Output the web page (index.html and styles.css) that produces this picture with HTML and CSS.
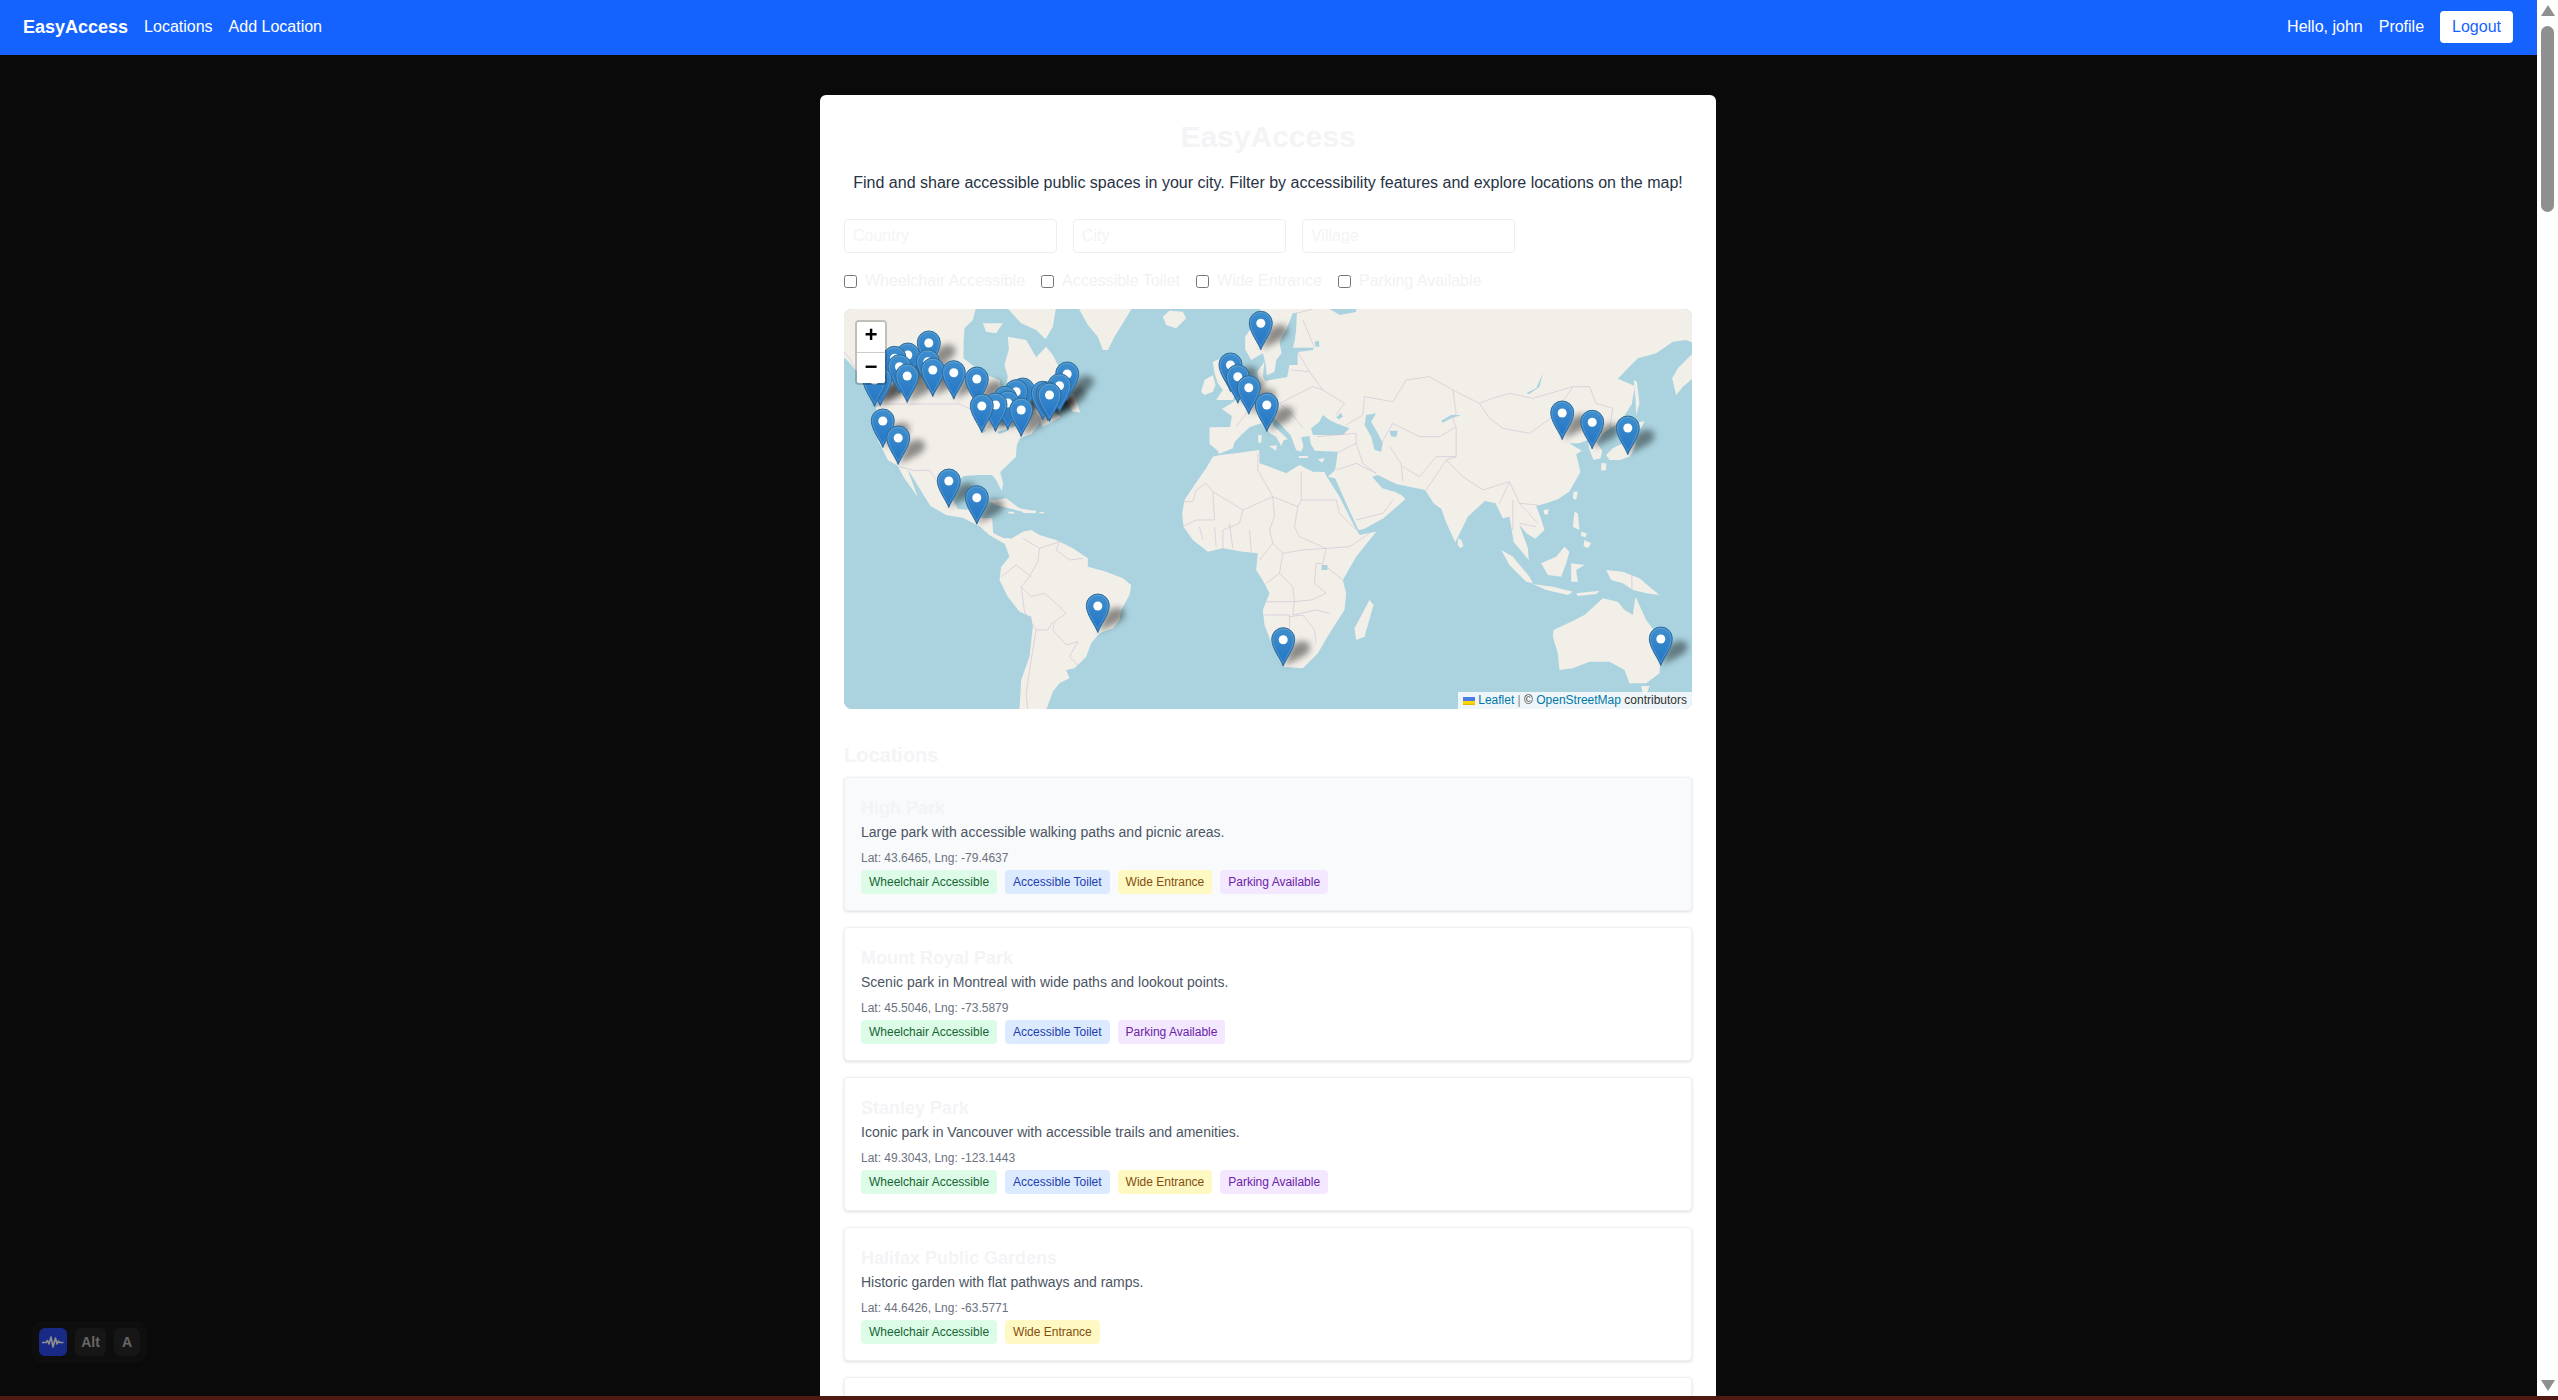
FILE: index.html
```html
<!DOCTYPE html>
<html lang="en">
<head>
  <meta charset="UTF-8" />
  <meta name="viewport" content="width=device-width, initial-scale=1.0"/>
  <title>EasyAccess</title>
  <link rel="stylesheet" href="styles.css">
</head>
<body>

  <div class="page">
    <nav class="navbar">
      <div class="nav-group">
        <a class="brand">EasyAccess</a>
        <a>Locations</a>
        <a>Add Location</a>
      </div>
      <div class="nav-group">
        <span>Hello, john</span>
        <a>Profile</a>
        <button class="logout">Logout</button>
      </div>
    </nav>

    <main class="panel">
      <h1>EasyAccess</h1>
      <p class="intro">Find and share accessible public spaces in your city. Filter by accessibility features and explore locations on the map!</p>

      <div class="search-row">
        <input type="text" placeholder="Country">
        <input type="text" placeholder="City">
        <input type="text" placeholder="Village">
      </div>

      <div class="check-row">
        <label><input type="checkbox">Wheelchair Accessible</label>
        <label><input type="checkbox">Accessible Toilet</label>
        <label><input type="checkbox">Wide Entrance</label>
        <label><input type="checkbox">Parking Available</label>
      </div>

      <div class="map">
        <svg class="map-art" width="848" height="400" viewBox="0 0 848 400" xmlns="http://www.w3.org/2000/svg">
          <defs>
            <linearGradient id="pinFill" x1="0" y1="0" x2="0" y2="1">
              <stop offset="0" stop-color="#3f8fce"/>
              <stop offset="1" stop-color="#2273c4"/>
            </linearGradient>
            <filter id="soft" x="-10%" y="-10%" width="120%" height="120%">
              <feGaussianBlur stdDeviation="3"/>
            </filter>
            <filter id="tile" x="-2%" y="-2%" width="104%" height="104%">
              <feGaussianBlur stdDeviation="0.35"/>
            </filter>
            <path id="pinShadow" d="M1,-1 L8,-20 Q16,-28 25,-24 Q30,-17 21,-11 Z"/>
            <g id="pin">
              <path class="pin-body" d="M0,-.5 C-2,-7 -11.5,-18 -11.5,-27.5 A11.5,11.5 0 1 1 11.5,-27.5 C11.5,-18 2,-7 0,-.5Z"/>
              <path class="pin-shine" d="M0,-4 C-2,-9 -10.3,-19 -10.3,-27.5 A10.3,10.3 0 1 1 10.3,-27.5 C10.3,-19 2,-9 0,-4Z"/>
              <circle class="pin-dot" cx="0" cy="-27" r="4.5"/>
            </g>
          </defs>

          <rect class="sea" width="848" height="400"/>

          <!-- Americas -->
          <g transform="translate(-4.5 -9) scale(.33333)" filter="url(#tile)">
            <path class="land" d="M-20,-20 L420,-20 L400,60 L375,85 L372,130 L372,175 L410,205 L449,228 L480,240 L487,275 L500,265 L505,230 L495,195 L508,148 L505,110 L560,120 L590,172 L620,140 L640,165 L665,215 L696,273 L660,297 L602,290 L620,312 L662,351 L610,381 L602,366 L576,402 L542,414 L532,435 L529,471 L482,516 L491,552 L487,573 L470,540 L458,525 L415,525 L372,528 L345,552 L340,597 L355,627 L398,630 L401,609 L431,606 L423,654 L458,655 L461,699 L491,714 L512,715 L520,740 L491,729 L449,705 L423,681 L372,654 L320,645 L273,618 L243,570 L210,516 L204,508 L235,591 L194,534 L175,498 L145,480 L115,420 L110,324 L122,312 L83,273 L65,228 L22,180 L-20,148 Z"/>
            <path class="land" d="M512,718 L550,695 L575,690 L600,705 L650,720 L700,745 L745,775 L745,800 L800,815 L850,835 L875,855 L870,885 L845,930 L840,960 L820,985 L780,1000 L755,1030 L740,1070 L705,1105 L680,1110 L690,1135 L660,1150 L640,1175 L620,1230 L540,1230 L545,1140 L570,1070 L580,980 L575,950 L540,935 L505,890 L480,840 L485,800 L510,770 L495,730 Z"/>
            <path class="land" d="M715,20 L745,75 L775,110 L790,150 L805,150 L825,110 L850,70 L880,20 Z"/>
            <path class="land" d="M970,50 L990,32 L1030,35 L1040,55 L1010,85 L980,75 Z"/>
            <path class="land" d="M500,20 L545,70 L590,90 L618,118 L640,80 L650,20 Z"/>
            <path class="land" d="M430,70 L490,70 L470,100 L440,95 Z"/>
            <path class="land" d="M685,275 L705,285 L722,337 L700,335 L680,300 Z"/>
            <path class="land" d="M450,602 L500,595 L540,625 L590,635 L560,638 L510,625 L470,615 Z"/>
            <path class="land" d="M545,628 L590,632 L588,640 L550,638 Z"/>
            <path class="land" d="M505,635 L525,636 L522,641 L507,640 Z"/>
            <path class="land" d="M600,636 L614,636 L614,640 L600,640 Z"/>
            <path class="sea" d="M392,322 L420,312 L450,318 L430,330 L400,328 Z"/>
            <path class="sea" d="M425,345 L437,345 L438,395 L428,400 Z"/>
            <path class="sea" d="M462,345 L490,352 L495,380 L472,372 Z"/>
            <path class="sea" d="M472,396 L510,384 L506,392 L480,402 Z"/>
            <path class="sea" d="M510,378 L535,368 L532,376 L514,384 Z"/>
            <path class="border" d="M13,155 L30,175 L45,200"/>
            <path class="border" d="M100,312 L360,312 L400,330 L440,340 L480,370 L520,375 L560,350 L590,340 L600,366"/>
            <path class="border" d="M180,500 L225,512 L270,510 L300,555 L340,590"/>
            <path class="border" d="M398,640 L410,660 L423,668"/>
            <path class="border" d="M550,715 L600,745 L595,785 L570,830 L545,860 L575,890 L615,880 L650,910 L680,940 L645,965 L640,990 L680,1035 L715,1025 L690,1070 L720,1100"/>
            <path class="border" d="M485,830 L530,795 L575,830"/>
            <path class="border" d="M590,990 L625,990 L640,965"/>
            <path class="border" d="M590,990 L575,1080 L560,1180 L565,1230"/>
            <path class="border" d="M600,745 L660,725 L650,750 L690,780 L730,775"/>
            <path class="border" d="M545,860 L555,935 L590,990"/>
          </g>

          <!-- Europe, Asia, Africa, Australia -->
          <g transform="translate(335.5 -9) scale(.33333)" filter="url(#tile)">
            <path class="land" d="M264,-20 L222,75 L197,110 L197,148 L215,180 L250,160 L258,190 L262,226 L285,215 L290,180 L306,160 L300,125 L323,82 L340,40 L352,38 L350,90 L345,125 L340,143 L402,143 L402,150 L355,156 L354,195 L330,195 L323,232 L310,233 L258,243 L250,229 L255,185 L233,215 L238,243 L210,253 L184,287 L154,311 L127,327 L157,348 L152,381 L90,382 L90,432 L115,452 L118,462 L160,445 L166,425 L185,405 L210,382 L245,370 L272,400 L290,410 L305,438 L313,420 L325,418 L283,378 L273,358 L285,355 L333,405 L350,450 L365,455 L372,438 L365,412 L390,408 L394,432 L406,452 L475,455 L467,510 L445,530 L467,535 L500,610 L537,690 L552,688 L612,655 L678,597 L665,585 L645,575 L608,565 L578,530 L595,525 L650,552 L737,570 L762,610 L786,627 L797,660 L827,727 L850,681 L865,650 L916,603 L948,610 L970,655 L990,650 L1003,727 L1048,780 L1045,745 L1020,675 L1041,700 L1067,716 L1095,690 L1084,655 L1070,618 L1100,610 L1135,598 L1169,575 L1203,516 L1190,463 L1207,452 L1169,430 L1199,430 L1225,420 L1229,447 L1242,480 L1263,475 L1268,452 L1251,425 L1272,400 L1289,387 L1323,365 L1357,312 L1366,258 L1315,236 L1345,205 L1375,175 L1430,160 L1480,125 L1520,120 L1545,130 L1545,-20 Z"/>
            <path class="land" d="M1490,285 L1478,235 L1495,205 L1540,160 L1540,235 L1510,260 Z"/>
            <path class="land" d="M118,466 L100,470 L80,505 L45,555 L15,600 L8,640 L12,680 L40,720 L85,755 L130,745 L190,755 L235,760 L230,810 L255,850 L270,880 L250,930 L255,975 L280,1040 L310,1100 L370,1105 L415,1060 L450,1000 L495,930 L500,880 L490,840 L530,770 L590,695 L540,705 L520,670 L480,590 L442,530 L435,516 L400,515 L360,495 L320,520 L270,500 L240,490 L239,450 L180,458 Z"/>
            <path class="land" d="M525,985 L570,900 L582,915 L555,1010 L530,1020 Z"/>
            <path class="land" d="M65,275 L75,240 L100,225 L108,255 L100,275 L75,285 Z"/>
            <path class="land" d="M100,185 L125,175 L140,230 L165,285 L160,300 L110,300 L130,270 L115,250 L105,220 Z"/>
            <path class="land" d="M1122,990 L1175,965 L1215,945 L1270,895 L1315,905 L1335,930 L1360,945 L1368,890 L1400,960 L1430,1000 L1445,1050 L1440,1120 L1400,1150 L1350,1150 L1335,1110 L1290,1085 L1230,1085 L1180,1105 L1140,1110 L1135,1060 L1120,1010 Z"/>
            <path class="land" d="M1385,1158 L1410,1158 L1402,1180 L1390,1178 Z"/>
            <path class="land" d="M1280,465 L1300,445 L1330,430 L1350,400 L1368,395 L1368,440 L1350,470 L1320,480 L1290,480 Z"/>
            <path class="land" d="M1265,490 L1280,490 L1280,510 L1265,512 Z"/>
            <path class="land" d="M1358,362 L1370,370 L1395,362 L1385,385 L1365,392 Z"/>
            <path class="land" d="M1363,240 L1372,245 L1380,310 L1370,345 L1368,300 Z"/>
            <path class="land" d="M1182,575 L1195,575 L1190,600 L1180,595 Z"/>
            <path class="land" d="M1092,630 L1108,628 L1104,645 L1094,642 Z"/>
            <path class="land" d="M835,715 L845,720 L852,738 L842,745 L835,735 Z"/>
            <path class="land" d="M1185,635 L1195,640 L1200,690 L1180,680 Z"/>
            <path class="land" d="M1205,695 L1222,700 L1218,712 L1205,708 Z"/>
            <path class="land" d="M1215,720 L1235,730 L1225,745 L1212,738 Z"/>
            <path class="land" d="M965,750 L1000,770 L1050,830 L1060,850 L1040,845 L990,795 Z"/>
            <path class="land" d="M1060,852 L1120,860 L1180,875 L1165,885 L1100,870 Z"/>
            <path class="land" d="M1085,790 L1130,770 L1155,740 L1170,755 L1160,790 L1145,830 L1105,825 Z"/>
            <path class="land" d="M1175,790 L1215,795 L1190,810 L1195,845 L1175,845 Z"/>
            <path class="land" d="M1280,810 L1330,815 L1380,835 L1415,865 L1440,885 L1400,880 L1360,870 L1330,850 L1295,840 Z"/>
            <path class="land" d="M1190,880 L1260,872 L1250,882 L1195,888 Z"/>
            <path class="land" d="M236,405 L246,405 L246,428 L236,428 Z"/>
            <path class="land" d="M268,438 L292,436 L290,452 Z"/>
            <path class="land" d="M358,468 L385,468 L385,474 L358,474 Z"/>
            <path class="land" d="M415,478 L436,474 L428,488 Z"/>
            <path class="sea" d="M395,385 L420,365 L430,345 L450,360 L470,370 L510,385 L490,405 L440,405 L400,405 Z"/>
            <path class="sea" d="M470,352 L485,338 L490,350 L478,358 Z"/>
            <path class="sea" d="M560,345 L590,340 L575,365 L595,400 L610,430 L605,455 L585,450 L575,410 L555,375 Z"/>
            <path class="sea" d="M630,392 L655,392 L650,412 L634,408 Z"/>
            <path class="sea" d="M785,362 L815,345 L845,345 L815,355 L790,368 Z"/>
            <path class="sea" d="M1040,280 L1070,265 L1090,220 L1080,260 L1050,282 Z"/>
            <path class="sea" d="M440,20 L530,20 L530,36 L480,45 Z"/>
            <path class="sea" d="M405,125 L418,122 L420,140 L408,140 Z"/>
            <path class="sea" d="M426,795 L444,795 L444,810 L426,810 Z"/>
            <path class="border" d="M100,575 L190,630 L280,590 L355,620 L365,600 L365,515"/>
            <path class="border" d="M365,600 L470,600 L480,640 L530,690"/>
            <path class="border" d="M355,620 L345,680 L360,710 L440,745 L510,740 L570,700"/>
            <path class="border" d="M8,605 L40,605 L50,570 L80,550 L100,575 L105,660 L50,660 L10,680"/>
            <path class="border" d="M235,460 L235,510 L280,590 L285,650 L270,690 L280,730 L240,780"/>
            <path class="border" d="M190,630 L180,670 L130,690 L130,750"/>
            <path class="border" d="M280,730 L310,760 L370,750 L440,745 L430,790 L410,790 L405,850 L440,880 L395,900 L345,905 L260,905"/>
            <path class="border" d="M310,760 L300,820 L260,850"/>
            <path class="border" d="M300,820 L340,860 L345,905 L340,945 L410,930 L450,940"/>
            <path class="border" d="M490,840 L440,800 L430,790"/>
            <path class="border" d="M255,945 L330,945 L330,1000 M330,950 L370,945 L405,990 L410,1030"/>
            <path class="border" d="M60,680 L70,720 M105,680 L110,740 M150,670 L160,745 M210,690 L215,755"/>
            <path class="border" d="M300,310 L340,290 L400,260 L430,270 L495,310 L470,345"/>
            <path class="border" d="M335,210 L390,215 L430,270 M355,156 L390,215"/>
            <path class="border" d="M240,290 L300,310 L340,345 L370,385 M240,250 L230,300 L170,380"/>
            <path class="border" d="M350,40 L400,27 M370,60 L405,143"/>
            <path class="border" d="M500,375 L550,345 L555,290 L640,305 L680,240 L750,230 L820,270 L900,310 L940,295 L990,280 L1060,295 L1180,260 L1230,260 L1250,310 L1300,325 L1290,385"/>
            <path class="border" d="M820,270 L830,340 L820,360 L830,380 L830,470"/>
            <path class="border" d="M900,310 L930,355 L970,385 L1050,400 L1120,350 L1180,260"/>
            <path class="border" d="M600,440 L640,370 L720,410 L780,410 L830,380"/>
            <path class="border" d="M530,400 L530,430 L550,490 L590,520 M630,440 L665,490 L670,545"/>
            <path class="border" d="M670,500 L720,530 L770,470 L830,470 L800,480 L850,530 L910,570 L990,545 L960,610"/>
            <path class="border" d="M740,570 L780,510 L800,480"/>
            <path class="border" d="M990,545 L1020,610 L1075,615 M1000,600 L1000,690 M1020,610 L1075,670 M1020,670 L1070,680"/>
            <path class="border" d="M412,410 L530,400 M470,460 L530,430 M470,510 L530,490 L590,520 M530,660 L610,640 L640,600"/>
            <path class="border" d="M1225,420 L1270,395 M1225,420 L1260,425"/>
            <path class="border" d="M1357,820 L1357,870"/>
          </g>

          <!-- Marker shadows -->
          <g class="pin-shadows" filter="url(#soft)">
            <use href="#pinShadow" x="416.8" y="41.3"/>
            <use href="#pinShadow" x="84.8" y="61"/>
            <use href="#pinShadow" x="63.8" y="73"/>
            <use href="#pinShadow" x="50.5" y="76.3"/>
            <use href="#pinShadow" x="83.8" y="79.7"/>
            <use href="#pinShadow" x="386.5" y="83"/>
            <use href="#pinShadow" x="55.5" y="84.7"/>
            <use href="#pinShadow" x="88.8" y="88"/>
            <use href="#pinShadow" x="109.8" y="90.7"/>
            <use href="#pinShadow" x="223.2" y="92"/>
            <use href="#pinShadow" x="63.2" y="94"/>
            <use href="#pinShadow" x="393.8" y="94.7"/>
            <use href="#pinShadow" x="132.8" y="97"/>
            <use href="#pinShadow" x="30.5" y="97.3"/>
            <use href="#pinShadow" x="36.2" y="98"/>
            <use href="#pinShadow" x="215.5" y="103.7"/>
            <use href="#pinShadow" x="404.8" y="105.7"/>
            <use href="#pinShadow" x="178.8" y="108"/>
            <use href="#pinShadow" x="172.2" y="109.7"/>
            <use href="#pinShadow" x="198.8" y="111.3"/>
            <use href="#pinShadow" x="203.8" y="112"/>
            <use href="#pinShadow" x="205.5" y="113"/>
            <use href="#pinShadow" x="161.2" y="116.3"/>
            <use href="#pinShadow" x="163.8" y="121"/>
            <use href="#pinShadow" x="422.8" y="123"/>
            <use href="#pinShadow" x="151.5" y="123"/>
            <use href="#pinShadow" x="137.8" y="124"/>
            <use href="#pinShadow" x="177.2" y="128"/>
            <use href="#pinShadow" x="718.2" y="131"/>
            <use href="#pinShadow" x="38.8" y="139"/>
            <use href="#pinShadow" x="748.2" y="140.3"/>
            <use href="#pinShadow" x="783.8" y="146"/>
            <use href="#pinShadow" x="54.2" y="156"/>
            <use href="#pinShadow" x="104.8" y="199"/>
            <use href="#pinShadow" x="132.8" y="215.7"/>
            <use href="#pinShadow" x="253.8" y="324"/>
            <use href="#pinShadow" x="816.8" y="357"/>
            <use href="#pinShadow" x="439.2" y="357.7"/>
          </g>

          <!-- Markers, north first -->
          <use href="#pin" x="416.8" y="41.3"/>
          <use href="#pin" x="84.8" y="61"/>
          <use href="#pin" x="63.8" y="73"/>
          <use href="#pin" x="50.5" y="76.3"/>
          <use href="#pin" x="83.8" y="79.7"/>
          <use href="#pin" x="386.5" y="83"/>
          <use href="#pin" x="55.5" y="84.7"/>
          <use href="#pin" x="88.8" y="88"/>
          <use href="#pin" x="109.8" y="90.7"/>
          <use href="#pin" x="223.2" y="92"/>
          <use href="#pin" x="63.2" y="94"/>
          <use href="#pin" x="393.8" y="94.7"/>
          <use href="#pin" x="132.8" y="97"/>
          <use href="#pin" x="36.2" y="97.3"/>
          <use href="#pin" x="30.5" y="98"/>
          <use href="#pin" x="215.5" y="103.7"/>
          <use href="#pin" x="404.8" y="105.7"/>
          <use href="#pin" x="178.8" y="108"/>
          <use href="#pin" x="172.2" y="109.7"/>
          <use href="#pin" x="198.8" y="111.3"/>
          <use href="#pin" x="203.8" y="112"/>
          <use href="#pin" x="205.5" y="113"/>
          <use href="#pin" x="161.2" y="116.3"/>
          <use href="#pin" x="163.8" y="121"/>
          <use href="#pin" x="422.8" y="123"/>
          <use href="#pin" x="151.5" y="123"/>
          <use href="#pin" x="137.8" y="124"/>
          <use href="#pin" x="177.2" y="128"/>
          <use href="#pin" x="718.2" y="131"/>
          <use href="#pin" x="38.8" y="139"/>
          <use href="#pin" x="748.2" y="140.3"/>
          <use href="#pin" x="783.8" y="146"/>
          <use href="#pin" x="54.2" y="156"/>
          <use href="#pin" x="104.8" y="199"/>
          <use href="#pin" x="132.8" y="215.7"/>
          <use href="#pin" x="253.8" y="324"/>
          <use href="#pin" x="816.8" y="357"/>
          <use href="#pin" x="439.2" y="357.7"/>
        </svg>

        <div class="zoom-box">
          <a class="zoom-btn">+</a>
          <a class="zoom-btn">−</a>
        </div>

        <div class="attribution">
          <svg class="flag" width="12" height="8" viewBox="0 0 12 8" xmlns="http://www.w3.org/2000/svg"><rect width="12" height="4" fill="#4C7BE1"/><rect y="4" width="12" height="3" fill="#FFD500"/><rect y="7" width="12" height="1" fill="#E0BC00"/></svg>
          <a>Leaflet</a> <span class="sep">|</span> © <a>OpenStreetMap</a> contributors
        </div>
      </div>

      <h2>Locations</h2>

      <div class="location-list">
        <div class="location location-hover">
          <h3>High Park</h3>
          <p class="desc">Large park with accessible walking paths and picnic areas.</p>
          <p class="coords">Lat: 43.6465, Lng: -79.4637</p>
          <div class="tags">
            <span class="tag tag-green">Wheelchair Accessible</span>
            <span class="tag tag-blue">Accessible Toilet</span>
            <span class="tag tag-yellow">Wide Entrance</span>
            <span class="tag tag-purple">Parking Available</span>
          </div>
        </div>
        <div class="location">
          <h3>Mount Royal Park</h3>
          <p class="desc">Scenic park in Montreal with wide paths and lookout points.</p>
          <p class="coords">Lat: 45.5046, Lng: -73.5879</p>
          <div class="tags">
            <span class="tag tag-green">Wheelchair Accessible</span>
            <span class="tag tag-blue">Accessible Toilet</span>
            <span class="tag tag-purple">Parking Available</span>
          </div>
        </div>
        <div class="location">
          <h3>Stanley Park</h3>
          <p class="desc">Iconic park in Vancouver with accessible trails and amenities.</p>
          <p class="coords">Lat: 49.3043, Lng: -123.1443</p>
          <div class="tags">
            <span class="tag tag-green">Wheelchair Accessible</span>
            <span class="tag tag-blue">Accessible Toilet</span>
            <span class="tag tag-yellow">Wide Entrance</span>
            <span class="tag tag-purple">Parking Available</span>
          </div>
        </div>
        <div class="location">
          <h3>Halifax Public Gardens</h3>
          <p class="desc">Historic garden with flat pathways and ramps.</p>
          <p class="coords">Lat: 44.6426, Lng: -63.5771</p>
          <div class="tags">
            <span class="tag tag-green">Wheelchair Accessible</span>
            <span class="tag tag-yellow">Wide Entrance</span>
          </div>
        </div>
        <div class="location location-empty"></div>
      </div>
    </main>
  </div>

  <div class="scrollbar">
    <span class="arrow arrow-up"></span>
    <span class="thumb"></span>
    <span class="arrow arrow-down"></span>
  </div>

  <div class="shortcuts">
    <span class="key key-voice">
      <svg width="24" height="16" viewBox="0 0 24 16" xmlns="http://www.w3.org/2000/svg"><path d="M1 8.5h4l1.5-2 1.5 3.500 2-7 2 10 2.500-9 1.500 6 1.500-3 1 1.500h4" fill="none" stroke="#8f8f8f" stroke-width="1.600" stroke-linejoin="round"/></svg>
    </span>
    <span class="key key-alt">Alt</span>
    <span class="key key-a">A</span>
  </div>

  <div class="bottom-strip"></div>

</body>
</html>
```

FILE: styles.css
```css
/* ─── Reset & Body ───────────────────────────────────────────────────────── */
* { box-sizing: border-box; margin: 0; padding: 0; }
body {
  display: flex;
  height: 100vh;
  overflow: hidden;
  background: #0a0a0a;
  color: #273244;
  font-family: "Liberation Sans", Arial, sans-serif;
  font-size: 16px;
  line-height: 24px;
}
.page {
  flex: 1;
  min-width: 0;
  overflow: hidden;
}

/* ─── Navbar ─────────────────────────────────────────────────────────────── */
.navbar {
  display: flex;
  align-items: center;
  justify-content: space-between;
  height: 55px;
  padding: 0 24px 1px 23px;
  background: #1563ff;
  color: #fff;
}
.nav-group {
  display: flex;
  align-items: center;
  gap: 16px;
}
.brand { font-size: 18px; font-weight: 700; }
.logout {
  height: 32px;
  padding: 0 12px;
  border: 0;
  border-radius: 4px;
  background: #fff;
  color: #1563ff;
  font: inherit;
}

/* ─── Panel ──────────────────────────────────────────────────────────────── */
.panel {
  width: 896px;
  margin: 40px 0 0 820px;
  padding: 24px;
  border-radius: 6px;
  background: #fff;
}
h1 {
  margin-bottom: 16px;
  color: #f3f4f6;
  font-size: 30px;
  line-height: 36px;
  text-align: center;
}
.intro { margin-bottom: 24px; text-align: center; }

/* ─── Filters ────────────────────────────────────────────────────────────── */
.search-row {
  display: flex;
  gap: 16px;
}
.search-row input {
  width: 213px;
  height: 34px;
  padding: 4px 8px;
  border: 1px solid #eceef1;
  border-radius: 4px;
  background: #fff;
  font: inherit;
  color: #f3f4f6;
}
.search-row input::placeholder { color: #f3f4f6; opacity: 1; }
.check-row {
  display: flex;
  gap: 16px;
  margin: 16px 0;
}
.check-row label {
  display: flex;
  align-items: center;
  gap: 8px;
  color: #f1f2f4;
}
.check-row input { width: 13px; height: 13px; margin: 0; }

/* ─── Map ────────────────────────────────────────────────────────────────── */
.map {
  position: relative;
  width: 848px;
  height: 400px;
  margin-bottom: 32px;
  border-radius: 8px;
  overflow: hidden;
  background: #aad3df;
}
.map-art { display: block; }
.sea { fill: #aad3df; }
.land { fill: #f2efe9; }
.border {
  fill: none;
  stroke: #d3c3d4;
  stroke-width: 2;
  stroke-linejoin: round;
}
.pin-shadows { fill: rgba(0,0,0,0.42); }
.pin-body { fill: url(#pinFill); stroke: #2d6c97; stroke-width: 1; }
.pin-shine { fill: none; stroke: rgba(255,255,255,0.16); stroke-width: 1; }
.pin-dot { fill: #fff; }

.zoom-box {
  position: absolute;
  top: 11px;
  left: 11px;
  width: 32px;
  border: 2px solid rgba(0,0,0,0.2);
  border-radius: 4px;
  background-clip: padding-box;
}
.zoom-btn {
  display: block;
  height: 30px;
  background: #fff;
  color: #000;
  font: 700 22px/30px "Liberation Mono", monospace;
  text-align: center;
}
.zoom-btn:first-child {
  border-bottom: 1px solid #ccc;
  height: 31px;
  border-radius: 2px 2px 0 0;
}
.zoom-btn:last-child { border-radius: 0 0 2px 2px; line-height: 32px; }
.attribution {
  position: absolute;
  right: 0;
  bottom: 0;
  height: 17px;
  padding: 0 5px;
  background: rgba(255,255,255,0.8);
  color: #333;
  font-size: 12px;
  line-height: 17px;
  white-space: nowrap;
}
.attribution a { color: #0078a8; }
.attribution .sep { color: #888; }
.flag { display: inline-block; vertical-align: -0.5px; }

/* ─── Locations ──────────────────────────────────────────────────────────── */
h2 {
  margin-bottom: 8px;
  color: #f3f4f6;
  font-size: 20px;
  line-height: 28px;
}
.location-list {
  display: flex;
  flex-direction: column;
  gap: 16px;
}
.location {
  padding: 16px;
  border: 1px solid #f0f1f3;
  border-radius: 4px;
  background: #fff;
  box-shadow: 0 1px 3px rgba(0,0,0,0.14);
}
.location-hover { background: #f9fafb; }
.location-empty { height: 134px; }
.location h3 {
  color: #f3f4f6;
  font-size: 18px;
  line-height: 28px;
}
.desc {
  color: #4b5563;
  font-size: 14px;
  line-height: 20px;
}
.coords {
  margin-top: 8px;
  color: #6b7280;
  font-size: 12px;
  line-height: 16px;
}
.tags {
  display: flex;
  gap: 8px;
  margin-top: 4px;
}
.tag {
  padding: 4px 8px;
  border-radius: 4px;
  font-size: 12px;
  line-height: 16px;
}
.tag-green { background: #dcfce7; color: #166534; }
.tag-blue { background: #dbeafe; color: #1e40af; }
.tag-yellow { background: #fef9c3; color: #854d0e; }
.tag-purple { background: #f3e8ff; color: #6b21a8; }

/* ─── Scrollbar ──────────────────────────────────────────────────────────── */
.scrollbar {
  display: flex;
  flex-direction: column;
  align-items: center;
  flex: 0 0 21px;
  padding-top: 5px;
  background: #fff;
}
.arrow {
  width: 0;
  height: 0;
  border-left: 7.500px solid transparent;
  border-right: 7.500px solid transparent;
}
.arrow-up { border-bottom: 11px solid #8f8f8f; }
.arrow-down { margin-top: auto; margin-bottom: 9px; border-top: 11px solid #8f8f8f; }
.thumb {
  width: 13px;
  height: 186px;
  margin-top: 10px;
  border-radius: 7px;
  background: #8f8f8f;
}

/* ─── Shortcut Keys ──────────────────────────────────────────────────────── */
.shortcuts {
  position: fixed;
  left: 32px;
  bottom: 37px;
  display: flex;
  align-items: center;
  gap: 8px;
  height: 42px;
  padding: 0 7px;
  border-radius: 10px;
  background: #0e0e0e;
}
.key {
  display: flex;
  align-items: center;
  justify-content: center;
  height: 28px;
  border-radius: 6px;
  background: #161616;
  color: #666;
  font-size: 14px;
  font-weight: 700;
}
.key-voice { width: 28px; background: #182a85; }
.key-alt { width: 31px; }
.key-a { width: 26px; }

.bottom-strip {
  position: fixed;
  left: 0;
  right: 0;
  bottom: 0;
  height: 4px;
  background: #4f1812;
}
```
